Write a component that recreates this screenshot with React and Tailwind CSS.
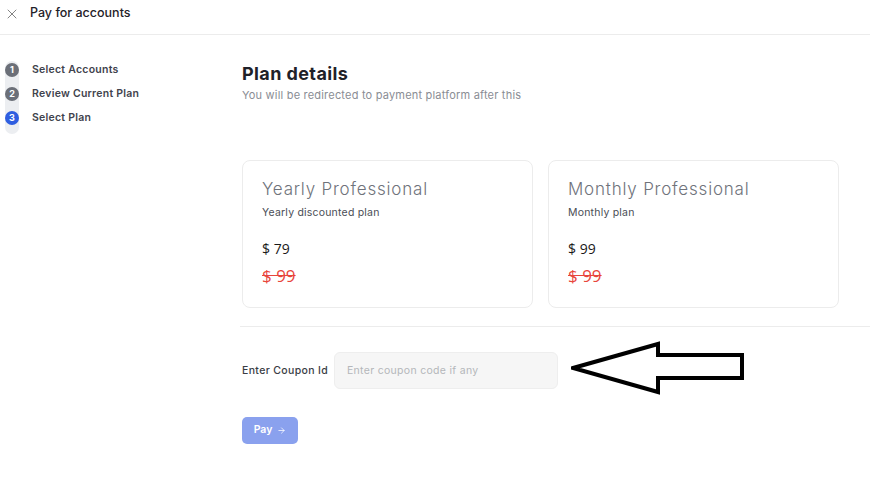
import React from "react";
import { X, ArrowRight } from "lucide-react";

const steps = [
  { id: 1, name: "Select Accounts", active: false },
  { id: 2, name: "Review Current Plan", active: false },
  { id: 3, name: "Select Plan", active: true },
];

const plans = [
  { id: "yearly", title: "Yearly Professional", desc: "Yearly discounted plan", price: "$ 79", old: "$ 99" },
  { id: "monthly", title: "Monthly Professional", desc: "Monthly plan", price: "$ 99", old: "$ 99" },
];

const App = () => {
  return (
    <div className="w-[870px] h-[491px] bg-white overflow-hidden font-['Inter',sans-serif] text-[#25272e]">
      <div className="h-[35px] flex items-start border-b border-[#ececec] pl-[4px] pt-[4px]">
        <X size={16} strokeWidth={1.4} className="text-[#7a7a7a] mt-[2px]" />
        <span className="ml-[10px] text-[12.5px] font-medium text-[#1f2128]">Pay for accounts</span>
      </div>
      <div className="flex">
        <div className="w-[242px] shrink-0 pt-[28px] pl-[5px]">
          <div className="relative">
            <div className="absolute left-0 top-[-2px] w-[14px] h-[73px] rounded-full bg-[#eceef1]" />
            <div className="relative flex flex-col gap-[10px]">
              {steps.map((step) => {
                return (
                  <div key={step.id} className="flex items-center h-[14px]">
                    <span
                      className={
                        step.active
                          ? "w-[14px] h-[14px] rounded-full bg-[#2f5ee0] text-white text-[9px] font-bold flex items-center justify-center"
                          : "w-[14px] h-[14px] rounded-full bg-[#6b6f78] text-white text-[9px] font-bold flex items-center justify-center"
                      }
                    >
                      {step.id}
                    </span>
                    <span className="ml-[13px] text-[10.5px] font-semibold tracking-[0.25px] text-[#3f434d]">{step.name}</span>
                  </div>
                );
              })}
            </div>
          </div>
        </div>
        <div className="flex-1 pt-[27px]">
          <h2 className="text-[18px] font-bold leading-[24px] tracking-[0.4px] text-[#1f2128]">Plan details</h2>
          <p className="text-[11px] tracking-[0.2px] text-[#8a8d94] mt-[1px]">You will be redirected to payment platform after this</p>
          <div className="flex gap-[15px] mt-[56px] pr-[31px]">
            {plans.map((plan) => {
              return (
                <div
                  key={plan.id}
                  className="flex-1 h-[148px] rounded-[8px] border border-[#ececec] pl-[19px] pt-[16px]"
                >
                  <h3 className="text-[17px] font-light tracking-[0.8px] text-[#6f737b] leading-[24px]">{plan.title}</h3>
                  <p className="text-[10.5px] tracking-[0.2px] text-[#4a4d55] mt-[4px]">{plan.desc}</p>
                  <div className="font-['Open_Sans',sans-serif] mt-[20px]">
                    <p className="text-[14px] text-[#1a1a1a] leading-[18px]">{plan.price}</p>
                    <p className="text-[17px] text-[#e8453c] line-through leading-[24px] mt-[6px]">{plan.old}</p>
                  </div>
                </div>
              );
            })}
          </div>
          <div className="border-t border-[#ececec] mt-[18px] ml-[-2px]" />
          <div className="flex items-center mt-[18px]">
            <label className="text-[10.5px] font-medium tracking-[0.35px] text-[#3a3d45] w-[92px]">Enter Coupon Id</label>
            <div className="w-[224px] h-[37px] rounded-[6px] bg-[#f6f6f6] border border-[#eeeeee] flex items-center pl-[12px]">
              <span className="text-[10.5px] tracking-[0.3px] text-[#b4b6ba]">Enter coupon code if any</span>
            </div>
            <svg width="178" height="56" viewBox="0 0 178 56" className="ml-[13px] -mt-[4px]" fill="none">
              <path
                d="M2 27 L87 3 L87 14 L171 14 L171 37 L87 37 L87 51 Z"
                stroke="#000"
                strokeWidth="4"
                strokeLinejoin="miter"
              />
            </svg>
          </div>
          <button className="mt-[20px] w-[56px] h-[27px] rounded-[5px] bg-[#8aa1ee] text-white text-[10.5px] font-semibold flex items-center justify-center gap-[5px]">
            Pay
            <ArrowRight size={9} strokeWidth={2} />
          </button>
        </div>
      </div>
    </div>
  );
};

export default App;
